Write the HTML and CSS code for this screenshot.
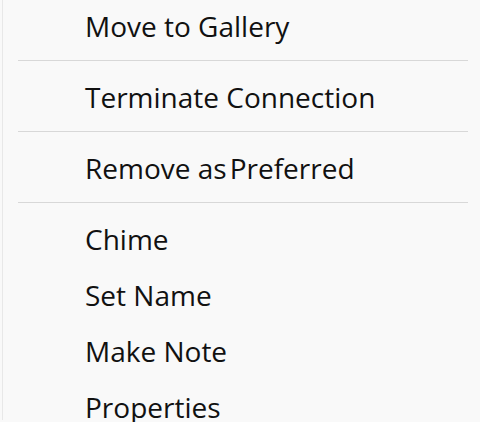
FILE: index.html
```html
<!DOCTYPE html>
<html lang="en">
<head>
  <meta charset="UTF-8" />
  <title>Context Menu</title>
  <link rel="stylesheet" href="styles.css">
</head>
<body>

  <div class="menu">
    <div class="item"><span>Move to Gallery</span></div>
    <div class="sep"></div>
    <div class="item"><span>Terminate Connection</span></div>
    <div class="sep"></div>
    <div class="item"><span>Remove as<span class="gap"></span>Preferred</span></div>
    <div class="sep"></div>
    <div class="item"><span>Chime</span></div>
    <div class="item"><span>Set Name</span></div>
    <div class="item"><span>Make Note</span></div>
    <div class="item"><span>Properties</span></div>
  </div>

</body>
</html>
```

FILE: styles.css
```css
body {
  margin: 0;
  padding-left: 2px;
  background: #f9f9f9;
  font-family: 'Open Sans', 'Noto Sans', sans-serif;
  color: #111;
  height: 422px;
  overflow: hidden;
}

.menu {
  border-left: 1px solid #e8e8e8;
  height: 100%;
  margin-top: -2px;
}

.item {
  height: 56px;
  display: flex;
  align-items: center;
  padding-left: 82px;
  font-size: 28px;
  white-space: nowrap;
}

.gap {
  display: inline-block;
  width: 3px;
}

.sep {
  height: 1px;
  background: #d8d8d8;
  margin: 6px 12px 8px 15px;
}
```
